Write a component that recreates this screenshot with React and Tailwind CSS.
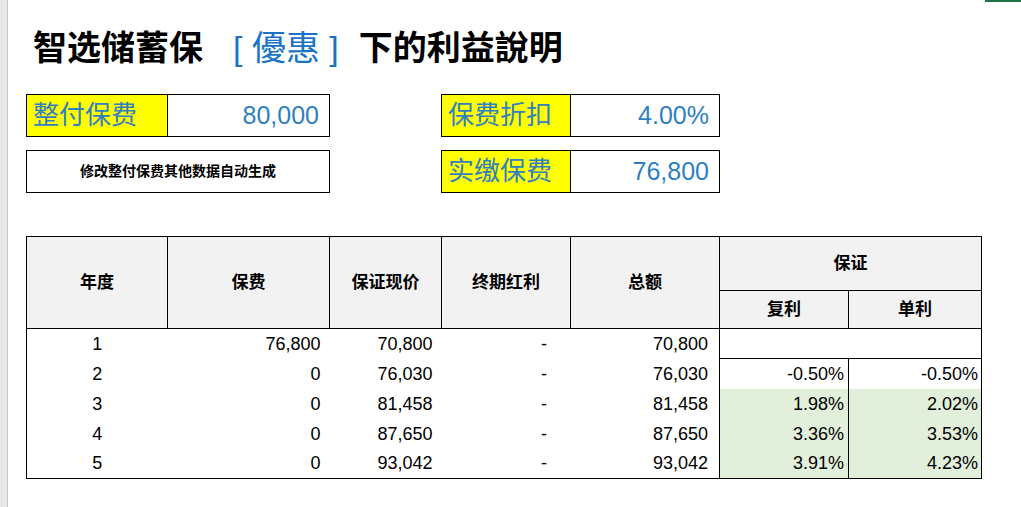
const F = { fontFamily: '"Liberation Sans", "Noto Sans CJK SC", sans-serif' };

const rows = [
  ["1", "76,800", "70,800", "-", "70,800", null, null],
  ["2", "0", "76,030", "-", "76,030", "-0.50%", "-0.50%"],
  ["3", "0", "81,458", "-", "81,458", "1.98%", "2.02%"],
  ["4", "0", "87,650", "-", "87,650", "3.36%", "3.53%"],
  ["5", "0", "93,042", "-", "93,042", "3.91%", "4.23%"],
];

function InfoBox({ label, value, labelW }) {
  return (
    <div className="flex h-[43px] w-full border border-black">
      <div className={`${labelW} bg-[#ffff00] border-r border-black flex items-center pl-[6px] text-[26px] text-[#2f7fc1]`}>
        {label}
      </div>
      <div className="flex-1 flex items-center justify-end pr-[10px] text-[25px] text-[#2f7fc1]">{value}</div>
    </div>
  );
}

export default function App() {
  return (
    <div style={F} className="relative w-[1021px] h-[507px] bg-white overflow-hidden flex">
      <div className="w-[8px] h-full bg-[#e8e8e8] border-r border-[#c8c8c8]" />
      <div className="absolute top-0 right-0 w-[36px] h-[2px] bg-[#1e7145]" />
      <div className="flex-1 pl-[18px] pt-[26px]">
        <div className="flex items-center h-[44px] text-[34px] font-bold text-black">
          <span className="ml-[7px]">智选储蓄保</span>
          <span className="ml-[30px] text-[#1a73c4] font-normal">[ 優惠 ]</span>
          <span className="ml-[20px]">下的利益說明</span>
        </div>
        <div className="mt-[24px] flex">
          <div className="w-[304px] flex flex-col gap-[13px]">
            <InfoBox label="整付保费" value="80,000" labelW="w-[141px]" />
            <div className="h-[43px] border border-black flex items-center justify-center text-[14px] font-bold">
              修改整付保费其他数据自动生成
            </div>
          </div>
          <div className="ml-[111px] w-[279px] flex flex-col gap-[13px]">
            <InfoBox label="保费折扣" value="4.00%" labelW="w-[129px]" />
            <InfoBox label="实缴保费" value="76,800" labelW="w-[129px]" />
          </div>
        </div>
        <table className="mt-[43px] border-collapse border border-black text-[18px]">
          <thead>
            <tr className="bg-[#f2f2f2] font-bold text-[17px] h-[54px]">
              {[
                ["年度", "w-[141px]"],
                ["保费", "w-[162px]"],
                ["保证现价", "w-[112px]"],
                ["终期红利", "w-[129px]"],
                ["总额", "w-[149px]"],
              ].map(([t, w]) => (
                <th key={t} rowSpan={2} className={`${w} border border-black font-bold`}>{t}</th>
              ))}
              <th colSpan={2} className="border border-black font-bold">保证</th>
            </tr>
            <tr className="bg-[#f2f2f2] h-[38px] text-[17px]">
              <th className="w-[129px] border border-black font-bold">复利</th>
              <th className="w-[133px] border border-black font-bold">单利</th>
            </tr>
          </thead>
          <tbody>
            {rows.map((r, i) => (
              <tr key={i} className="h-[30px] leading-none">
                <td className="text-center">{r[0]}</td>
                <td className="text-right pr-[9px]">{r[1]}</td>
                <td className="text-right pr-[9px]">{r[2]}</td>
                <td className="text-center pl-[76px]">{r[3]}</td>
                <td className="text-right pr-[11px]">{r[4]}</td>
                {i === 0 ? (
                  <td colSpan={2} className="border border-black" />
                ) : (
                  <>
                    <td className={`text-right pr-[4px] border-l border-black ${i > 1 ? "bg-[#e2efda]" : ""}`}>{r[5]}</td>
                    <td className={`text-right pr-[3px] border-l border-black ${i > 1 ? "bg-[#e2efda]" : ""}`}>{r[6]}</td>
                  </>
                )}
              </tr>
            ))}
          </tbody>
        </table>
      </div>
    </div>
  );
}
